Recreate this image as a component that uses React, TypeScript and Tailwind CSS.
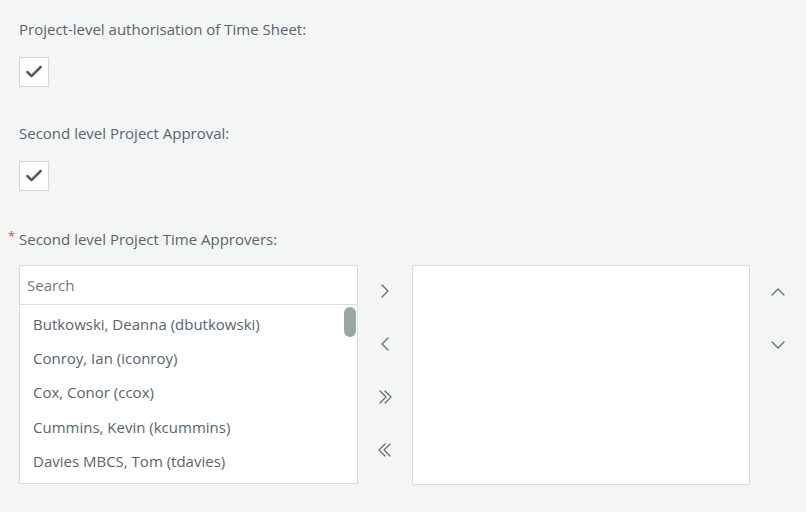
import { Check, ChevronRight, ChevronLeft, ChevronUp, ChevronDown } from 'lucide-react'

const people = [
  'Butkowski, Deanna (dbutkowski)',
  'Conroy, Ian (iconroy)',
  'Cox, Conor (ccox)',
  'Cummins, Kevin (kcummins)',
  'Davies MBCS, Tom (tdavies)',
]

function Box() {
  return (
    <div className="w-[30px] h-[30px] bg-white border border-[#d5d9dc] flex items-center justify-center">
      <Check size={20} strokeWidth={3} className="text-[#4f5d6a]" />
    </div>
  )
}

// tighter double chevron than lucide's
function Double({ left }: { left?: boolean }) {
  return (
    <svg width="24" height="24" viewBox="0 0 24 24" fill="none" stroke="currentColor" strokeWidth="1.2" strokeLinecap="round" strokeLinejoin="round">
      {left
        ? <path d="M12 6l-6 6 6 6M17 6l-6 6 6 6" />
        : <path d="M7 6l6 6-6 6M12 6l6 6-6 6" />}
    </svg>
  )
}

export default function App() {
  return (
    <div className="w-[806px] h-[512px] bg-[#f4f6f6] text-[#58646f] font-['Open_Sans',sans-serif] text-[15px] overflow-hidden">
      <div className="pl-[19px] pt-[17px]">
        <p className="leading-[24px]">Project-level authorisation of Time Sheet:</p>
        <div className="mt-[16px]"><Box /></div>

        <p className="mt-[34px] leading-[24px]">Second level Project Approval:</p>
        <div className="mt-[16px]"><Box /></div>

        <p className="mt-[36px] leading-[24px] relative">
          <span className="absolute -left-[11px] -top-[3px] text-[#e0503a] text-[13px]">*</span>
          Second level Project Time Approvers:
        </p>

        <div className="mt-[14px] flex">
          <div className="w-[339px]">
            <div className="h-[40px] bg-white border border-[#d8dcde] rounded-t-[2px] flex items-center px-[7px] text-[#6f7a83]">
              Search
            </div>
            <div className="h-[179px] bg-white border border-t-0 border-[#d8dcde] relative">
              <div className="pt-[2px]">
                {people.map(p => (
                  <div key={p} className="h-[34.3px] flex items-center pl-[13px]">{p}</div>
                ))}
              </div>
              <div className="absolute right-[1px] top-[2px] w-[12px] h-[30px] rounded-full bg-[#9ba6a6]" />
            </div>
          </div>

          <div className="w-[54px] flex flex-col items-center pt-[14px] gap-[29px] text-[#5c6873]">
            <ChevronRight size={24} strokeWidth={1.2} />
            <ChevronLeft size={24} strokeWidth={1.2} />
            <Double />
            <Double left />
          </div>

          <div className="w-[339px] h-[220px] bg-white border border-[#d8dcde] rounded-[2px]" />

          <div className="w-[56px] flex flex-col items-center pt-[15px] gap-[29px] text-[#5c6873]">
            <ChevronUp size={24} strokeWidth={1.2} />
            <ChevronDown size={24} strokeWidth={1.2} />
          </div>
        </div>
      </div>
    </div>
  )
}
